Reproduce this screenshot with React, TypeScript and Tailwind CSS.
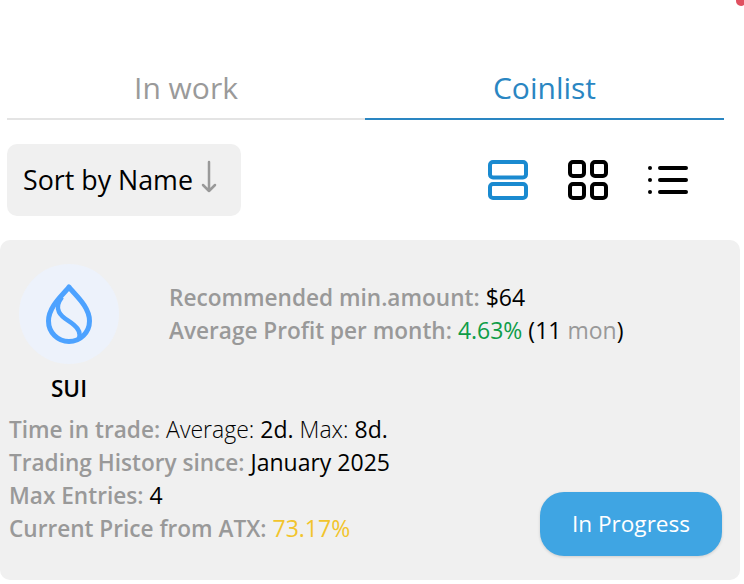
export default function App() {
  const label = "font-semibold text-[#999] text-[22.6px]";
  return (
    <div className="w-[744px] h-[584px] bg-white relative overflow-hidden font-['Open_Sans','Noto_Sans',sans-serif]">
      <div className="absolute -top-[4px] -right-[2px] w-[10px] h-[10px] rounded-full bg-[#e05060]" />
      <div className="pt-[64px] pl-[7px] pr-[20px]">
        <div className="flex h-[56px] text-[30px]">
          <div className="w-[358px] flex items-center justify-center pb-[8px] text-[#9a9a9a] border-b-2 border-[#e4e4e4]">In work</div>
          <div className="w-[359px] flex items-center justify-center pb-[8px] text-[#2a86c2] border-b-2 border-[#2a86c2]">Coinlist</div>
        </div>
        <div className="flex items-center justify-between mt-[24px] h-[72px]">
          <div className="w-[234px] h-[72px] rounded-[10px] bg-[#f0f0f0] flex items-center pl-[16px] text-[26.8px] text-black gap-[8px]">
            <span>Sort by Name</span>
            <svg width="16" height="34" viewBox="0 0 16 34" fill="none" stroke="#999" strokeWidth="2.5" strokeLinecap="round" strokeLinejoin="round" className="-mt-[6px]">
              <path d="M8 2V31M2 25l6 6 6-6" />
            </svg>
          </div>
          <div className="flex items-center gap-[40px] mr-[36px]">
            <svg width="40" height="40" viewBox="0 0 40 40" fill="none" stroke="#1a8ad0" strokeWidth="4">
              <rect x="2" y="2" width="36" height="15.5" rx="3" />
              <rect x="2" y="24" width="36" height="14" rx="3" />
            </svg>
            <svg width="40" height="40" viewBox="0 0 40 40" fill="none" stroke="#000" strokeWidth="4">
              <rect x="2" y="2" width="14" height="14" rx="3" />
              <rect x="24" y="2" width="14" height="14" rx="3" />
              <rect x="2" y="24" width="14" height="14" rx="3" />
              <rect x="24" y="24" width="14" height="14" rx="3" />
            </svg>
            <svg width="40" height="40" viewBox="0 0 40 40" fill="#000">
              <path d="M12 8H38M12 20H38M12 32H38" stroke="#000" strokeWidth="4" strokeLinecap="round" />
              <circle cx="2" cy="8" r="2" />
              <circle cx="2" cy="20" r="2" />
              <circle cx="2" cy="32" r="2" />
            </svg>
          </div>
        </div>
      </div>
      <div className="relative mt-[24px] mr-[4px] h-[340px] rounded-[10px] bg-[#f0f0f0] pl-[9px] pt-[24px]">
        <div className="flex">
          <div className="w-[120px] flex flex-col items-center">
            <div className="w-[100px] h-[100px] rounded-full bg-[#edf2fb] flex items-center justify-center">
              <svg width="46" height="60" viewBox="0 0 46 60" fill="none" stroke="#4da2ff" strokeWidth="5" strokeLinejoin="round" strokeLinecap="butt">
                <path d="M23 3 C28 10 43.5 22 43.5 37 A20.5 20.5 0 0 1 2.5 37 C2.5 22 18 10 23 3Z" />
                <path d="M16 13 C12 18 11 24 13 28 C16 34 22 36 28 41 C33 45 35 49 33 55" strokeWidth="4.5" />
              </svg>
            </div>
            <div className="mt-[7px] text-[22.6px] font-semibold text-black leading-[36px]">SUI</div>
          </div>
          <div className="ml-[40px] pt-[17px] text-[23px] leading-[32px] text-black">
            <div><span className={label}>Recommended min.amount:</span> <span>$64</span></div>
            <div><span className={label}>Average Profit per month:</span> <span className="text-[#0f9d48]">4.63%</span> (11 <span className="text-[#999]">mon</span>)</div>
          </div>
        </div>
        <div className="text-[23px] leading-[32px] text-black mt-[6px]">
          <div><span className={label}>Time in trade:</span> <span className="font-light">Average:</span> 2d. <span className="font-light">Max:</span> 8d.</div>
          <div><span className={label}>Trading History since:</span> January 2025</div>
          <div><span className={label}>Max Entries:</span> 4</div>
          <div><span className={label}>Current Price from ATX:</span> <span className="text-[#f2c42c]">73.17%</span></div>
        </div>
        <div className="absolute left-[540px] top-[252px] w-[182px] h-[64px] rounded-[24px] bg-[#3fa5e3] text-white text-[22.6px] flex items-center justify-center shadow-[0_1px_3px_rgba(0,0,0,0.15)]">In Progress</div>
      </div>
    </div>
  );
}
